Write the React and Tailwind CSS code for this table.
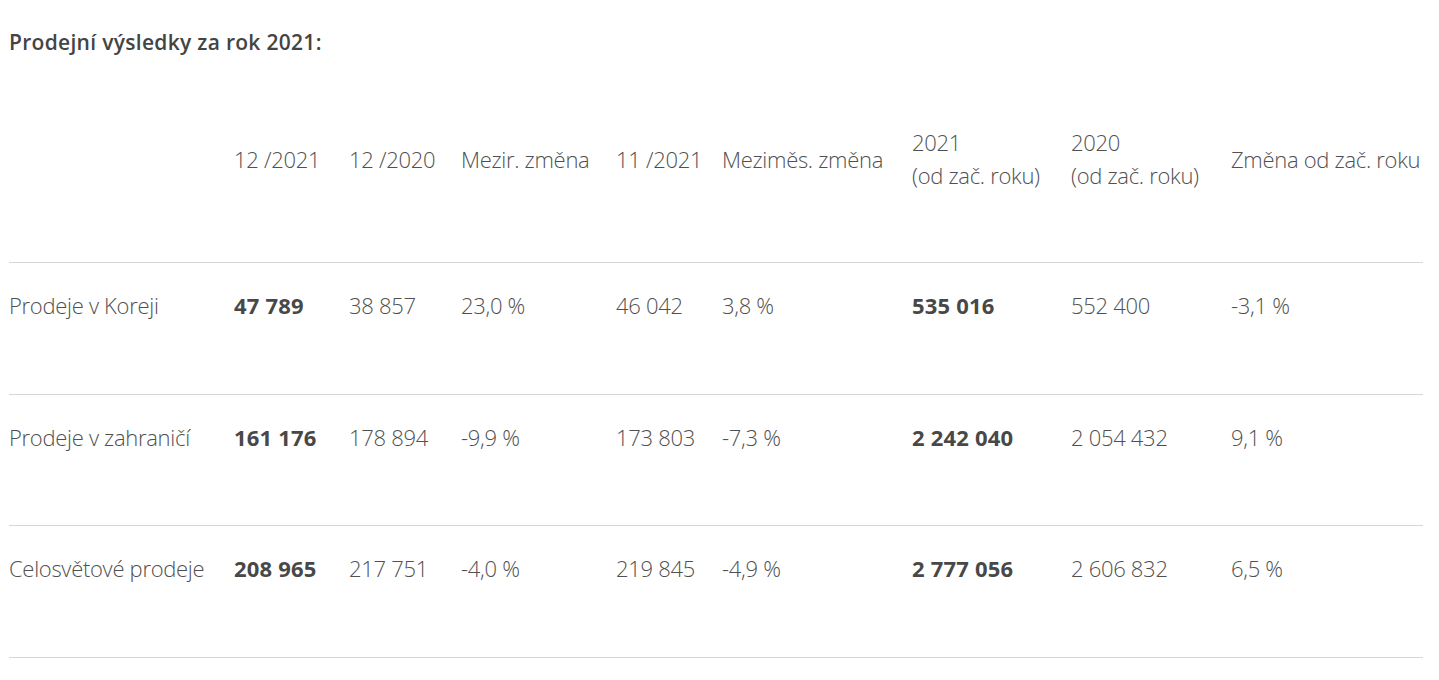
const cols = "grid grid-cols-[225px_115px_112px_155px_106px_190px_159px_160px_192px]";

const headers = [
  "",
  "12 /2021",
  "12 /2020",
  "Mezir. změna",
  "11 /2021",
  "Meziměs. změna",
  ["2021", "(od zač. roku)"],
  ["2020", "(od zač. roku)"],
  "Změna od zač. roku",
];

const rows = [
  ["Prodeje v Koreji", "47 789", "38 857", "23,0 %", "46 042", "3,8 %", "535 016", "552 400", "-3,1 %"],
  ["Prodeje v zahraničí", "161 176", "178 894", "-9,9 %", "173 803", "-7,3 %", "2 242 040", "2 054 432", "9,1 %"],
  ["Celosvětové prodeje", "208 965", "217 751", "-4,0 %", "219 845", "-4,9 %", "2 777 056", "2 606 832", "6,5 %"],
];

export default function App() {
  return (
    <div className="min-h-screen bg-white px-[9px] pt-[29px] text-[#505050] font-['Open_Sans',sans-serif]">
      <h2 className="text-[21px] font-semibold text-[#444] leading-[26px] tracking-[0.3px]">Prodejní výsledky za rok 2021:</h2>

      <div className="w-[1414px] mt-[3px]">
        <div className={`${cols} h-[205px] items-center pb-[2px] border-b-[1.5px] border-[#d6d6d6]`}>
          {headers.map((h, i) => (
            <div key={i} className="text-[22px] font-light leading-[33px] tracking-[-0.3px] whitespace-nowrap">
              {Array.isArray(h) ? (
                <>
                  <div>{h[0]}</div>
                  <div>{h[1]}</div>
                </>
              ) : (
                h
              )}
            </div>
          ))}
        </div>

        {rows.map((r, ri) => (
          <div key={ri} className={`${cols} h-[131.6px] pt-[28px] border-b-[1.5px] border-[#d6d6d6]`}>
            {r.map((c, ci) => (
              <div
                key={ci}
                className={`text-[22px] leading-[28px] whitespace-nowrap ${
                  ci === 1 || ci === 6 ? "font-bold text-[#484848] tracking-[0.2px]" : "font-light tracking-[-0.3px]"
                }`}
              >
                {c}
              </div>
            ))}
          </div>
        ))}
      </div>
    </div>
  );
}
